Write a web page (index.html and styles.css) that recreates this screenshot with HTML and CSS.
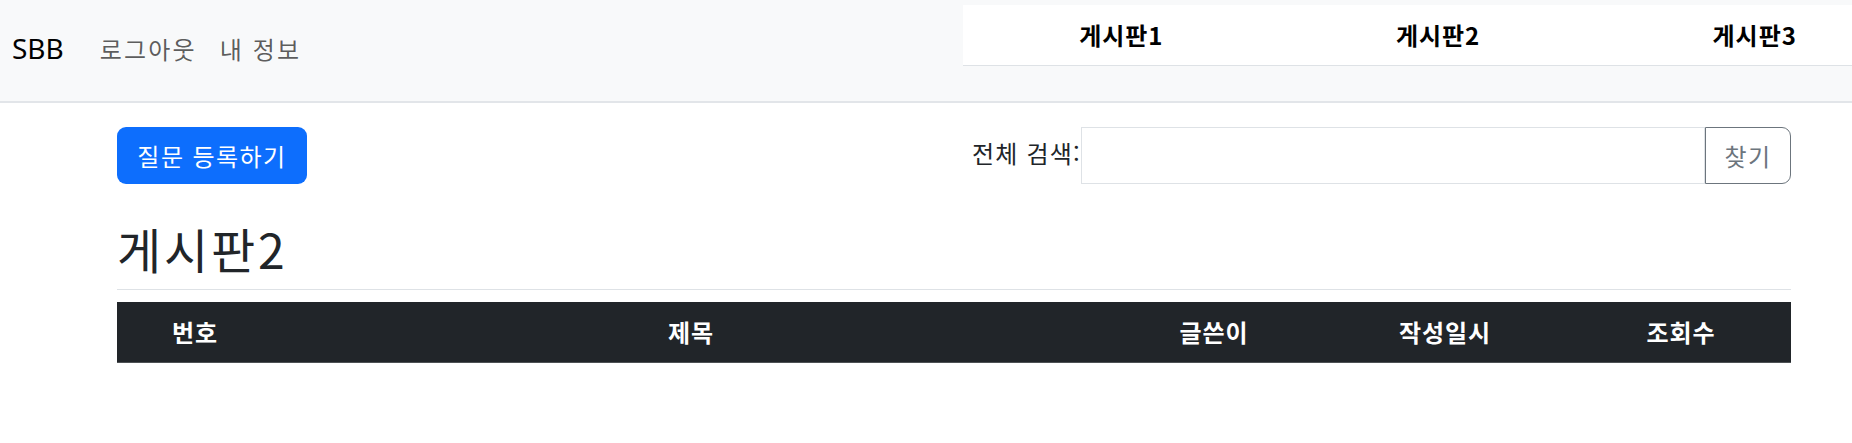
FILE: index.html
```html
<!DOCTYPE html>
<html lang="ko">
<head>
<meta charset="utf-8">
<title>SBB</title>
<link rel="stylesheet" href="styles.css">
</head>
<body>
<nav class="navbar">
  <div class="nav-left">
    <a class="brand">SBB</a>
    <a class="nav-link">로그아웃</a>
    <a class="nav-link">내 정보</a>
  </div>
  <div class="boards">
    <div class="board">게시판1</div>
    <div class="board">게시판2</div>
    <div class="board">게시판3</div>
  </div>
</nav>
<main class="container">
  <div class="toolbar">
    <a class="btn-primary">질문 등록하기</a>
    <div class="search">
      <span class="search-label">전체 검색:</span>
      <div class="search-input"></div>
      <a class="btn-outline">찾기</a>
    </div>
  </div>
  <h2 class="title">게시판2</h2>
  <div class="table-head">
    <div class="th c1">번호</div>
    <div class="th c2">제목</div>
    <div class="th c3">글쓴이</div>
    <div class="th c4">작성일시</div>
    <div class="th c5">조회수</div>
  </div>
</main>
</body>
</html>
```
FILE: styles.css
```css
* { box-sizing: border-box; }
html, body { margin: 0; padding: 0; overflow: hidden; }
body {
  font-family: "Noto Sans CJK KR", sans-serif;
  color: #212529;
  background: #fff;
  font-size: 24px;
  letter-spacing: 0.06em;
}
.navbar {
  display: flex;
  height: 103px;
  background: #f8f9fa;
  border-bottom: 2px solid #e2e5e9;
  overflow: hidden;
}
.nav-left {
  flex: 0 0 963px;
  display: flex;
  align-items: center;
  padding-left: 12px;
  padding-bottom: 4px;
}
.brand {
  font-family: "Noto Sans", sans-serif;
  font-size: 28px;
  letter-spacing: 0;
  color: #000;
  margin-right: 24px;
  line-height: 45px;
}
.nav-link {
  color: rgba(0,0,0,0.65);
  padding: 0 12px;
  line-height: 36px;
  letter-spacing: 0.09em;
}
.nav-link + .nav-link { padding-left: 11px; }
.boards {
  flex: 0 0 950px;
  display: flex;
  align-self: flex-start;
  margin-top: 5px;
  background: #fff;
  border-bottom: 1px solid #dee2e6;
}
.board {
  flex: 1;
  text-align: center;
  font-weight: 700;
  color: #000;
  line-height: 36px;
  padding: 12px 0;
  letter-spacing: 0.04em;
}
.container {
  margin-left: 117px;
  width: 1674px;
}
.toolbar {
  display: flex;
  justify-content: space-between;
  align-items: center;
  margin-top: 24px;
}
.btn-primary {
  display: block;
  background: #0d6efd;
  color: #fff;
  border-radius: 9px;
  height: 57px;
  line-height: 57px;
  width: 190px;
  text-align: center;
}
.search {
  display: flex;
  align-items: center;
}
.search-label {
  line-height: 36px;
  margin-bottom: 6px;
  letter-spacing: 0.05em;
}
.search-input {
  width: 624px;
  height: 57px;
  border: 1px solid #dee2e6;
  background: #fff;
}
.btn-outline {
  display: block;
  height: 57px;
  width: 86px;
  line-height: 55px;
  text-align: center;
  color: #6c757d;
  border: 1.5px solid #6c757d;
  border-radius: 0 9px 9px 0;
}
.title {
  font-size: 48px;
  font-weight: 400;
  line-height: 57px;
  margin: 36px 0 12px;
  padding-bottom: 12px;
  border-bottom: 1.5px solid #dee2e6;
  letter-spacing: 0.06em;
}
.table-head {
  display: flex;
  background: #212529;
  color: #fff;
  border-bottom: 1.5px solid #4d5154;
}
.th {
  text-align: center;
  font-weight: 700;
  line-height: 36px;
  padding: 12px 0;
  letter-spacing: 0.04em;
}
.c1 { width: 156px; }
.c2 { width: 836px; }
.c3 { width: 210px; }
.c4 { width: 252px; }
.c5 { width: 220px; }
```
